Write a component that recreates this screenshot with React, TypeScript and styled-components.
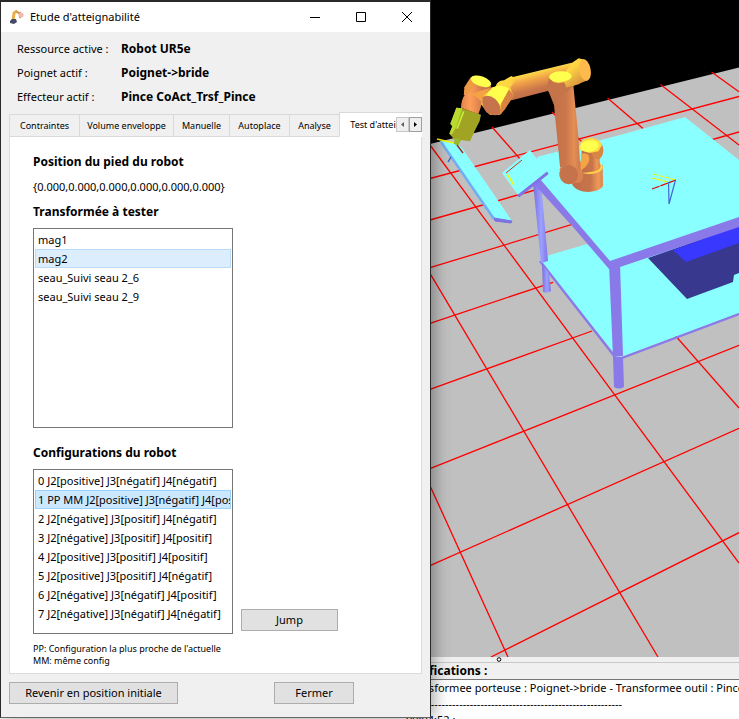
import React, { useState } from "react";
import styled, { createGlobalStyle, css } from "styled-components";

const GlobalStyle = createGlobalStyle`
  *, *::before, *::after { box-sizing: border-box; }
  html, body, #root { height: 100%; }
  body {
    margin: 0;
    background: #f0f0f0;
    color: #000;
    font: 11px/16px "Noto Sans", "Open Sans", sans-serif;
  }
  button { font: inherit; color: inherit; }
`;

const Desktop = styled.div`
  position: relative;
  display: flex;
  flex-direction: column;
  min-height: 100%;
  height: 100vh;
  overflow: hidden;
`;

const Viewport = styled.div`
  flex: 1;
  min-height: 0;
  background: #000;
  svg { display: block; width: 100%; height: 100%; }
`;

const Splitter = styled.div`
  display: flex;
  justify-content: center;
  height: 6px;
  padding-left: 259px;
  border-bottom: 1px solid #c8c8c8;
  svg { display: block; }
`;

const Notifications = styled.section`
  display: flex;
  flex-direction: column;
  height: 56px;
  h2 {
    margin: 0;
    padding-left: 403px;
    font-size: 12px;
    line-height: 16px;
    font-weight: 700;
  }
`;

const Log = styled.div`
  flex: 1;
  overflow: hidden;
  padding-left: 406px;
  border-top: 1px solid #767676;
  background: #fff;
  white-space: nowrap;
  p { margin: 0; line-height: 16px; }
`;

const Dialog = styled.section`
  position: absolute;
  top: 0;
  left: 0;
  display: flex;
  flex-direction: column;
  width: min(431px, 100%);
  border: 1px solid #2a2a2a;
  border-top-width: 2px;
  border-bottom-color: #666;
  background: #f0f0f0;
  box-shadow: 2px 0 16px rgba(0, 0, 0, 0.4);
`;

const TitleBar = styled.header`
  display: flex;
  align-items: center;
  height: 30px;
  padding-left: 8px;
  background: #fff;
  h1 {
    flex: 1;
    margin: 0 0 0 5px;
    font-size: 11px;
    font-weight: 400;
  }
`;

const CaptionButton = styled.button`
  display: grid;
  place-items: center;
  width: 46px;
  height: 30px;
  padding: 0;
  border: 0;
  background: transparent;
  svg { display: block; }
`;

const Summary = styled.dl`
  display: grid;
  grid-template-columns: 104px 1fr;
  margin: 0;
  padding: 5px 16px 3px;
  line-height: 24px;
  dt, dd { margin: 0; white-space: nowrap; }
  dd { font-size: 12px; font-weight: 700; }
`;

const Body = styled.div`
  display: flex;
  flex-direction: column;
  padding: 0 8px 13px;
`;

const TabStrip = styled.div`
  position: relative;
  display: flex;
  align-items: flex-end;
  height: 25px;
  overflow: hidden;
`;

const Tab = styled.button<{ $width: number; $active?: boolean }>`
  flex: none;
  width: ${(p) => p.$width}px;
  height: 23px;
  padding: 1px 0 0;
  border: 1px solid #d9d9d9;
  border-right-width: 0;
  background: #f0f0f0;
  font-size: 9px;
  line-height: 12px;
  white-space: nowrap;
  ${(p) =>
    p.$active &&
    css`
      height: 25px;
      border-bottom-color: #fff;
      background: #fff;
    `}
`;

const TabScroller = styled.div`
  position: absolute;
  top: 5px;
  right: 0;
  display: flex;
`;

const ScrollButton = styled.button<{ $dim?: boolean }>`
  display: grid;
  place-items: center;
  width: 13px;
  height: 15px;
  padding: 0;
  border: 1px solid ${(p) => (p.$dim ? "#c8c8c8" : "#a0a0a0")};
  background: #efefef;
  color: ${(p) => (p.$dim ? "#606060" : "#000")};
  svg { display: block; }
`;

const Panel = styled.div`
  display: flex;
  flex-direction: column;
  align-items: flex-start;
  padding: 15px 23px 6px;
  border: 1px solid #dcdcdc;
  border-top: 0;
  background: #fff;
  h2 {
    margin: 0;
    font-size: 12px;
    line-height: 20px;
    font-weight: 700;
  }
`;

const Position = styled.p`
  margin: 7px 0;
  line-height: 16px;
`;

const List = styled.ul<{ $tall?: boolean }>`
  width: 200px;
  height: ${(p) => (p.$tall ? 200 : 165)}px;
  margin: ${(p) => (p.$tall ? "6px 0 15px" : "0")};
  padding: 1px;
  overflow: hidden;
  border: 1px solid #767676;
  list-style: none;
`;

const Item = styled.li<{ $tone?: "light" | "strong" }>`
  height: 19px;
  padding: 0 2px;
  overflow: hidden;
  border: 1px solid transparent;
  line-height: 17px;
  white-space: nowrap;
  cursor: default;
  ${(p) =>
    p.$tone === "light" &&
    css`
      border-color: #b8dcfa;
      background: #dceefe;
    `}
  ${(p) =>
    p.$tone === "strong" &&
    css`
      border-color: #99d1ff;
      background: #cce8ff;
    `}
`;

const ConfigRow = styled.div`
  display: flex;
  align-items: flex-end;
  gap: 8px;
  margin-top: 6px;
`;

const PushButton = styled.button<{ $width: number }>`
  width: ${(p) => p.$width}px;
  height: 22px;
  padding: 0;
  border: 1px solid #adadad;
  background: #e1e1e1;
  line-height: 20px;
  white-space: nowrap;
`;

const JumpSlot = styled.div`
  display: flex;
  padding-bottom: 3px;
`;

const Legend = styled.p`
  margin: 9px 0 0;
  font-size: 9px;
  line-height: 12px;
`;

const Footer = styled.footer`
  display: flex;
  gap: 96px;
  padding-top: 8px;
`;

const AppIcon = () => (
  <svg width="16" height="16" viewBox="0 0 16 16" aria-hidden="true">
    <path d="M4 12L5 4L8 2" fill="none" stroke="#e8b04a" strokeWidth="3" />
    <path d="M7 2L11 5" stroke="#d19a48" strokeWidth="2" />
    <path d="M1 12L3 10H7L8 13L5 15L1 14Z" fill="#454b66" />
    <circle cx="12" cy="6" r="2.6" fill="#f4b8ac" />
    <path d="M10 4L12 3M10 8L12 9" stroke="#c78a80" />
  </svg>
);

const gridLines = [
  [430, 178.5, 739, 96.5], [430, 220, 739, 132], [430, 267.7, 739, 173.5],
  [430, 323.3, 553, 282.3], [430, 389.3, 592, 331], [430, 468.7, 739, 345.3],
  [430, 565.7, 739, 428.3], [491, 657, 739, 532.7],
  [430, 485.7, 508, 657], [430, 273.3, 658, 657], [430, 145, 739, 563],
  [492, 127, 739, 408], [552, 112, 600, 160], [607.5, 98, 643, 128.5],
  [660.5, 84.5, 739, 145], [711.5, 72, 739, 91.7],
];

const Robot = () => (
  <g transform="translate(430 50) scale(0.33333)">
    {/* base */}
    <path d="M427 365V405Q440 425 475 426Q510 424 519 408L518 345L455 340Z" fill="url(#base)" />
    <ellipse cx="478" cy="352" rx="40" ry="20" fill="#ffd84a" />
    <ellipse cx="475" cy="348" rx="37" ry="19" fill="#e88b4f" />
    <path d="M455 285H509V350Q490 368 455 368Z" fill="url(#base)" />
    <ellipse cx="502" cy="301" rx="18" ry="27" fill="#d98543" />
    <path d="M452 276Q468 262 487 264Q512 270 516 286L505 304L478 309L450 300Z" fill="#ffdd42" />
    <ellipse cx="478" cy="288" rx="28" ry="17" transform="rotate(-10 478 288)" fill="#ffff4d" />
    <path d="M453 312Q465 306 475 314Q485 330 467 350L452 362Z" fill="#f5a445" />
    {/* lower arm */}
    <path d="M353 118L430 105L446 270L453 390L410 372L390 350L372 165Z" fill="url(#lower)" />
    <path d="M388 358Q401 340 429 349L456 366Q465 382 452 397L417 402Z" fill="#d98250" />
    <ellipse cx="416" cy="374" rx="28" ry="29" transform="rotate(-35 416 374)" fill="#c4734b" />
    {/* upper arm */}
    <path d="M240 83L425 38L450 102L350 124L245 151L215 125Z" fill="url(#upper)" />
    <path d="M358 80L425 76L431 107L408 128L358 126L352 108Z" fill="#c4734b" />
    <path d="M425 39L446 25L466 30L475 90L432 107L385 118L358 82L405 67Z" fill="url(#shoulder)" />
    <ellipse cx="465" cy="60" rx="17" ry="33" transform="rotate(-11 465 60)" fill="#ffba4e" />
    <ellipse cx="391" cy="80" rx="34" ry="16" transform="rotate(-3 391 80)" fill="#ffff4d" />
    <path d="M360 91Q378 104 402 97Q412 110 405 128L370 148L353 121Z" fill="#c5744a" />
    {/* elbow */}
    <path d="M196 112Q200 92 222 91L244 78L259 86L241 113L251 137L213 193L193 195Z" fill="url(#shoulder)" />
    <path d="M135 128L160 120L189 112L216 109Q240 119 242 137L208 195L179 194L150 160Z" fill="#ffc043" />
    <path d="M184 114Q216 98 242 120L218 166L163 143Z" fill="#ffff4d" />
    <path d="M157 142Q174 130 196 147Q214 164 211 192Q188 201 169 187Q155 170 157 142Z" fill="#c5744c" />
    <path d="M237 118L251 137L224 179L210 193L214 160Z" fill="#d98343" />
    {/* wrist */}
    <path d="M101 135Q103 113 125 81L181 97L184 117L158 136L152 173L145 193L93 173Q94 148 104 135Z" fill="url(#wrist)" />
    <path d="M120 133L152 122L184 113L158 139L155 158Q146 141 120 133Z" fill="#f4a244" />
    <path d="M102 133L103 112L122 82L138 99L120 126Z" fill="#ee9a45" />
    <ellipse cx="153" cy="94" rx="32" ry="15" transform="rotate(19 153 94)" fill="#ffff4d" />
    {/* gripper */}
    <path d="M79 173L97 175L153 194L149 213L135 241L120 274L93 270L83 287L71 280L76 272L58 251L67 229L61 221Z" fill="#a1a422" />
    <path d="M79 173L97 175L78 233L65 254L58 251L67 229L61 221Z" fill="#b9db31" />
    <path d="M101 184L81 236" stroke="#c8ed39" strokeWidth="5" />
    <path d="M76 263L93 270L83 287L71 280Z" fill="#98b82d" />
  </g>
);

const Scene = () => (
  <svg viewBox="0 0 739 657" preserveAspectRatio="xMinYMin slice" role="img" aria-label="Robot UR5e">
    <defs>
      <linearGradient id="upper" gradientUnits="userSpaceOnUse" x1="320" y1="60" x2="338" y2="130">
        <stop offset="0" stopColor="#ffe547" /><stop offset=".35" stopColor="#f2a348" />
        <stop offset=".75" stopColor="#c9764a" /><stop offset="1" stopColor="#bf6e4a" />
      </linearGradient>
      <linearGradient id="lower">
        <stop offset="0" stopColor="#bf6e49" /><stop offset=".55" stopColor="#ca774c" />
        <stop offset=".8" stopColor="#e58e53" /><stop offset="1" stopColor="#c7774c" />
      </linearGradient>
      <linearGradient id="shoulder" x1="0" y1="0" x2="1" y2="1">
        <stop offset="0" stopColor="#ffdf45" /><stop offset=".45" stopColor="#ffd443" />
        <stop offset="1" stopColor="#c5723c" />
      </linearGradient>
      <linearGradient id="base">
        <stop offset="0" stopColor="#bd6c48" /><stop offset=".6" stopColor="#c7764b" />
        <stop offset=".85" stopColor="#f09959" /><stop offset="1" stopColor="#d9824e" />
      </linearGradient>
      <linearGradient id="wrist">
        <stop offset="0" stopColor="#e0854e" /><stop offset=".3" stopColor="#ff9e58" />
        <stop offset=".7" stopColor="#d37b4b" /><stop offset="1" stopColor="#c17342" />
      </linearGradient>
      <linearGradient id="leg">
        <stop offset="0" stopColor="#7b6ddd" /><stop offset=".55" stopColor="#9ba1ff" />
        <stop offset="1" stopColor="#8172e7" />
      </linearGradient>
    </defs>
    <path d="M0 250L430 144L739 67.5V657H0Z" fill="#c0c0c0" />
    <g stroke="#f00" strokeWidth="1.3">
      {gridLines.map(([x1, y1, x2, y2]) => (
        <line key={`${x1}-${y1}`} x1={x1} y1={y1} x2={x2} y2={y2} />
      ))}
    </g>
    {/* lower shelf */}
    <path d="M543 257L587 244L612 262L739 222V313L618 358L540 261Z" fill="#8affff" />
    <path d="M540 261L615 357M622 358L739 314" stroke="#8a79e9" strokeWidth="2.4" />
    {/* stored box */}
    <path d="M648 258L739 226V273L734 275L733 282L687 299Z" fill="#38388e" />
    <path d="M673 250L739 226V243L686 262Z" fill="#3838ff" />
    {/* legs */}
    <path d="M533 182L541 184L548 261L541 263Z" fill="url(#leg)" />
    <path d="M542 264L549 273L551 291Q547 294 543 292Z" fill="url(#leg)" />
    <path d="M609 264H620L623 356L613 357Z" fill="#8a79e9" />
    <path d="M613 357H623L624 387Q619 390 614 387Z" fill="#8a79e9" />
    {/* worktop */}
    <path d="M537 157L620 135L685 117L739 160V219L610 262L538 181Z" fill="#8affff" />
    <path d="M533 183L540 179L610 261L739 217V227L620 267L609 269L573 227Z" fill="#8a79e9" />
    {/* tilted plate */}
    <path d="M502 173L530 150L547 172L518 195Z" fill="#8affff" />
    <path d="M518 195L547 172L548 174L519 197Z" fill="#8172e7" stroke="#8172e7" />
    <path d="M506 173L522 160" stroke="#d32a20" />
    <path d="M507 174L514 185" stroke="#f7f500" strokeWidth="1.5" />
    {/* conveyor plank */}
    <path d="M440 141L455 142L462 148L512 221L494 219Z" fill="#8affff" />
    <path d="M441 142L494 219" stroke="#70adf5" strokeWidth="2.5" />
    <path d="M494 218L512 221L511 223L495 221Z" fill="#7c70e3" stroke="#7c70e3" />
    <path d="M437 139L454 143" stroke="#f7f500" strokeWidth="1.4" />
    <path d="M451 157L448 162" stroke="#315fce" strokeWidth="1.4" />
    {/* frames */}
    <g fill="none" strokeWidth="1.2">
      <path d="M653 174L676 180M652 178L668 182" stroke="#f7f500" strokeDasharray="5 1" />
      <path d="M652 189L676 180" stroke="#e00000" strokeDasharray="8 1" />
      <path d="M668.5 182L669 204L675.5 180" stroke="#3f68d8" />
    </g>
    <Robot />
    <path d="M457 145L463 153" stroke="#9a2a20" strokeWidth="1.4" />
  </svg>
);

const summary = [
  ["Ressource active :", "Robot UR5e"],
  ["Poignet actif :", "Poignet->bride"],
  ["Effecteur actif :", "Pince CoAct_Trsf_Pince"],
];

const tabs = [
  { name: "Contraintes", width: 70 },
  { name: "Volume enveloppe", width: 94 },
  { name: "Manuelle", width: 56 },
  { name: "Autoplace", width: 60 },
  { name: "Analyse", width: 50 },
  { name: "Test d'atteignabilité", width: 104 },
];

const transforms = ["mag1", "mag2", "seau_Suivi seau 2_6", "seau_Suivi seau 2_9"];

const configurations = [
  "0 J2[positive] J3[négatif] J4[négatif]",
  "1 PP MM J2[positive] J3[négatif] J4[positif]",
  "2 J2[négative] J3[positif] J4[négatif]",
  "3 J2[négative] J3[positif] J4[positif]",
  "4 J2[positive] J3[positif] J4[positif]",
  "5 J2[positive] J3[positif] J4[négatif]",
  "6 J2[négative] J3[négatif] J4[positif]",
  "7 J2[négative] J3[négatif] J4[négatif]",
];

export default function App() {
  const [transform, setTransform] = useState(1);
  const [config, setConfig] = useState(1);

  return (
    <Desktop>
      <GlobalStyle />
      <Viewport><Scene /></Viewport>
      <Splitter>
        <svg width="6" height="5" viewBox="0 0 6 5" aria-hidden="true">
          <circle cx="3" cy="2.5" r="1.8" fill="#fff" stroke="#000" />
        </svg>
      </Splitter>
      <Notifications>
        <h2>Notifications :</h2>
        <Log>
          <p>Transformee porteuse : Poignet-&gt;bride - Transformee outil : Pince</p>
          <p>-------------------------------------------------------------</p>
          <p>00:04:52 :</p>
        </Log>
      </Notifications>

      <Dialog role="dialog" aria-labelledby="dialog-title">
        <TitleBar>
          <AppIcon />
          <h1 id="dialog-title">Etude d'atteignabilité</h1>
          <CaptionButton aria-label="Réduire">
            <svg width="12" height="12" stroke="#000"><path d="M1 6.5H11" /></svg>
          </CaptionButton>
          <CaptionButton aria-label="Agrandir">
            <svg width="12" height="12" stroke="#000" fill="none"><path d="M1.5 1.5H10.5V10.5H1.5Z" /></svg>
          </CaptionButton>
          <CaptionButton aria-label="Fermer la fenêtre">
            <svg width="12" height="12" stroke="#000"><path d="M1 1L11 11M11 1L1 11" /></svg>
          </CaptionButton>
        </TitleBar>

        <Summary>
          {summary.map(([label, value]) => (
            <React.Fragment key={label}>
              <dt>{label}</dt>
              <dd>{value}</dd>
            </React.Fragment>
          ))}
        </Summary>

        <Body>
          <TabStrip role="tablist">
            {tabs.map(({ name, width }, i) => (
              <Tab key={name} role="tab" aria-selected={i === 5} $width={width} $active={i === 5}>{name}</Tab>
            ))}
            <TabScroller>
              <ScrollButton $dim aria-label="Onglets précédents">
                <svg width="5" height="7"><path d="M4 1V6L1 3.5Z" fill="currentColor" /></svg>
              </ScrollButton>
              <ScrollButton aria-label="Onglets suivants">
                <svg width="5" height="7"><path d="M1 1V6L4 3.5Z" fill="currentColor" /></svg>
              </ScrollButton>
            </TabScroller>
          </TabStrip>

          <Panel role="tabpanel">
            <h2>Position du pied du robot</h2>
            <Position>{"{0.000,0.000,0.000,0.000,0.000,0.000}"}</Position>
            <h2 id="transform-label">Transformée à tester</h2>
            <List $tall role="listbox" aria-labelledby="transform-label">
              {transforms.map((name, i) => (
                <Item
                  key={name}
                  role="option"
                  aria-selected={i === transform}
                  $tone={i === transform ? "light" : undefined}
                  onClick={() => setTransform(i)}
                >
                  {name}
                </Item>
              ))}
            </List>
            <h2 id="config-label">Configurations du robot</h2>
            <ConfigRow>
              <List role="listbox" aria-labelledby="config-label">
                {configurations.map((name, i) => (
                  <Item
                    key={name}
                    role="option"
                    aria-selected={i === config}
                    $tone={i === config ? "strong" : undefined}
                    onClick={() => setConfig(i)}
                  >
                    {name}
                  </Item>
                ))}
              </List>
              <JumpSlot>
                <PushButton $width={97}>Jump</PushButton>
              </JumpSlot>
            </ConfigRow>
            <Legend>
              PP: Configuration la plus proche de l'actuelle
              <br />
              MM: même config
            </Legend>
          </Panel>

          <Footer>
            <PushButton $width={169}>Revenir en position initiale</PushButton>
            <PushButton $width={80}>Fermer</PushButton>
          </Footer>
        </Body>
      </Dialog>
    </Desktop>
  );
}
